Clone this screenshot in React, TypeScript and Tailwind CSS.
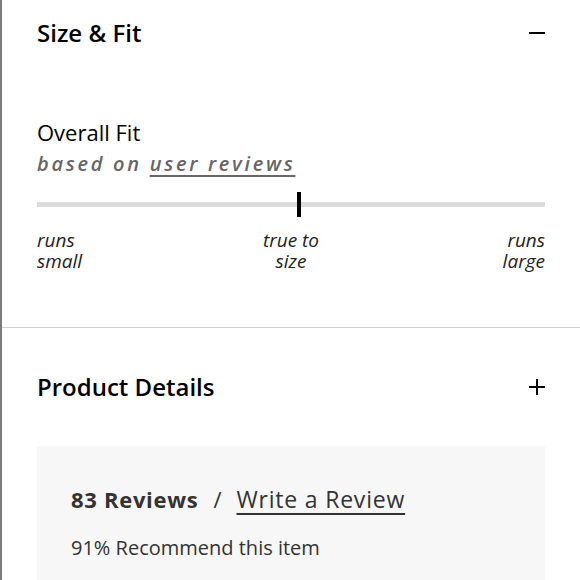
import React from "react";

export default function App() {
  return (
    <div className="w-[580px] h-[580px] overflow-hidden bg-white border-l-2 border-[#7a7a7a] font-['Open_Sans',sans-serif] text-black">
      <div className="pl-[35px] pr-[35px] pt-[18px] pb-[55px]">
        <div className="flex items-center justify-between h-[30px]">
          <h2 className="text-[24px] font-semibold leading-[30px]">Size &amp; Fit</h2>
          <div className="w-[16px] h-[2px] bg-black" />
        </div>
        <div className="mt-[71px] text-[22px] leading-[26px]">Overall Fit</div>
        <div className="mt-[6px] text-[20px] leading-[26px] italic font-semibold text-[#666] tracking-[2.7px]">
          based on <span className="underline underline-offset-[4px] decoration-[2px]">user reviews</span>
        </div>
        <div className="relative mt-[25px] h-[5px] bg-[#dcdcdc]">
          <div className="absolute left-[260px] top-[-10px] w-[4px] h-[25px] bg-black" />
        </div>
        <div className="mt-[23px] grid grid-cols-3 text-[19px] leading-[21px] italic text-[#222]">
          <div>runs<br />small</div>
          <div className="text-center">true to<br />size</div>
          <div className="text-right">runs<br />large</div>
        </div>
      </div>
      <div className="h-[1px] bg-[#d0d0d0]" />
      <div className="pl-[35px] pr-[35px] pt-[44px]">
        <div className="flex items-center justify-between h-[30px]">
          <h2 className="text-[24px] font-semibold leading-[30px]">Product Details</h2>
          <div className="relative w-[16px] h-[16px]">
            <div className="absolute left-0 top-[7px] w-[16px] h-[2px] bg-black" />
            <div className="absolute left-[7px] top-0 w-[2px] h-[16px] bg-black" />
          </div>
        </div>
        <div className="mt-[44px] bg-[#f7f7f7] px-[34px] pt-[38px] pb-[40px] text-[#333]">
          <div className="text-[22px] leading-[30px] whitespace-nowrap">
            <span className="font-bold tracking-[0.7px]">83 Reviews</span>
            <span className="mx-[15px]">/</span>
            <span className="text-[23px] tracking-[0.8px] underline underline-offset-[5px] decoration-[1.5px]">Write a Review</span>
          </div>
          <div className="mt-[22px] text-[20px] leading-[24px]">91% Recommend this item</div>
        </div>
      </div>
    </div>
  );
}
